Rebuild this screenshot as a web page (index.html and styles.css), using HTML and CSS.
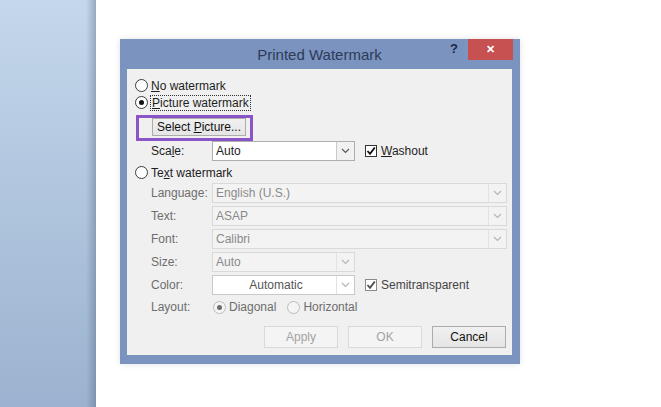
FILE: index.html
```html
<!DOCTYPE html>
<html>
<head>
    <meta charset="UTF-8">
    <title>Printed Watermark</title>
    <link rel="stylesheet" href="styles.css">
</head>
<body>
<div class="page">
    <div class="sidebar"></div>
    <div class="stage">
        <div class="dialog">
            <div class="titlebar">
                <span></span>
                <span class="title">Printed Watermark</span>
                <div class="controls">
                    <span class="help">?</span>
                    <span class="close">&#x2715;</span>
                </div>
            </div>

            <div class="content">
                <div class="row radioRow">
                    <i class="radio"></i>
                    <span><u>N</u>o watermark</span>
                </div>
                <div class="row radioRow">
                    <i class="radio on"></i>
                    <span class="focus"><u>P</u>icture watermark</span>
                </div>

                <div class="highlight">
                    <div class="btn pick">Select <u>P</u>icture...</div>
                </div>

                <div class="row field">
                    <span class="label">Sca<u>l</u>e:</span>
                    <div class="combo short">
                        <span class="val">Auto</span>
                        <span class="arr"><svg width="9" height="6" viewBox="0 0 9 6"><polyline points="1,1 4.5,4.5 8,1"/></svg></span>
                    </div>
                    <i class="check"><svg width="10" height="10" viewBox="0 0 10 10"><polyline points="1.5,5 4,7.8 8.8,1.5"/></svg></i>
                    <span><u>W</u>ashout</span>
                </div>

                <div class="row radioRow textMark">
                    <i class="radio"></i>
                    <span>Te<u>x</u>t watermark</span>
                </div>

                <div class="row field off">
                    <span class="label">Language:</span>
                    <div class="combo wide">
                        <span class="val">English (U.S.)</span>
                        <span class="arr"><svg width="9" height="6" viewBox="0 0 9 6"><polyline points="1,1 4.5,4.5 8,1"/></svg></span>
                    </div>
                </div>
                <div class="row field off">
                    <span class="label">Text:</span>
                    <div class="combo wide">
                        <span class="val">ASAP</span>
                        <span class="arr"><svg width="9" height="6" viewBox="0 0 9 6"><polyline points="1,1 4.5,4.5 8,1"/></svg></span>
                    </div>
                </div>
                <div class="row field off">
                    <span class="label">Font:</span>
                    <div class="combo wide">
                        <span class="val">Calibri</span>
                        <span class="arr"><svg width="9" height="6" viewBox="0 0 9 6"><polyline points="1,1 4.5,4.5 8,1"/></svg></span>
                    </div>
                </div>
                <div class="row field off">
                    <span class="label">Size:</span>
                    <div class="combo short">
                        <span class="val">Auto</span>
                        <span class="arr"><svg width="9" height="6" viewBox="0 0 9 6"><polyline points="1,1 4.5,4.5 8,1"/></svg></span>
                    </div>
                </div>
                <div class="row field off">
                    <span class="label">Color:</span>
                    <div class="combo short white">
                        <span class="val center">Automatic</span>
                        <span class="arr"><svg width="9" height="6" viewBox="0 0 9 6"><polyline points="1,1 4.5,4.5 8,1"/></svg></span>
                    </div>
                    <i class="check grey"><svg width="10" height="10" viewBox="0 0 10 10"><polyline points="1.5,5 4,7.8 8.8,1.5"/></svg></i>
                    <span class="semi">Semitransparent</span>
                </div>
                <div class="row field off layout">
                    <span class="label">Layout:</span>
                    <i class="radio dim on"></i>
                    <span class="opt first">Diagonal</span>
                    <i class="radio dim"></i>
                    <span class="opt">Horizontal</span>
                </div>

                <div class="buttons">
                    <div class="btn disabled">Apply</div>
                    <div class="btn disabled">OK</div>
                    <div class="btn">Cancel</div>
                </div>
            </div>
        </div>
    </div>
</div>
</body>
</html>
```

FILE: styles.css
```css
* {
    margin: 0;
    padding: 0;
    box-sizing: border-box;
}

html, body {
    width: 661px;
    height: 407px;
    overflow: hidden;
    background: #fff;
    font-family: "Liberation Sans", Arial, sans-serif;
    font-size: 12px;
    color: #1e1e1e;
}

.page {
    display: flex;
    height: 407px;
}

/*左侧Word背景*/
.sidebar {
    width: 96px;
    flex: none;
    background: linear-gradient(to right, rgba(0, 0, 0, 0) 86px, rgba(70, 85, 110, .35) 96px),
                linear-gradient(to bottom, #c4d7eb, #9bb3d0);
}

.stage {
    flex: 1;
    padding: 39px 0 0 24px;
}

.dialog {
    width: 400px;
    padding: 0 8px 9px 7px;
    background: #7b93bf;
    box-shadow: 0 0 6px rgba(0, 0, 0, .12);
}

.titlebar {
    display: grid;
    grid-template-columns: 1fr auto 1fr;
    align-items: center;
    height: 30px;
}

.title {
    font-size: 15px;
    color: #2d3b58;
}

.controls {
    justify-self: end;
    align-self: start;
    display: flex;
    margin-right: -1px;
}

.help {
    margin: 2px 10px 0 0;
    font-weight: bold;
    font-size: 13px;
    color: #1c2946;
}

.close {
    width: 45px;
    height: 21px;
    line-height: 21px;
    text-align: center;
    background: #c75050;
    color: #fff;
    font-size: 11px;
    font-weight: bold;
}

.content {
    display: flex;
    flex-direction: column;
    background: #f0f0f0;
    padding: 8px 5px 7px 8px;
}

.row {
    display: flex;
    align-items: center;
}

.radioRow {
    height: 17px;
}

.radioRow span {
    margin-left: 3px;
}

.radio {
    display: block;
    position: relative;
    width: 13px;
    height: 13px;
    flex: none;
    border: 1px solid #3c3c3c;
    border-radius: 50%;
    background: #fff;
}

.radio.on::after {
    content: "";
    position: absolute;
    top: 3px;
    left: 3px;
    width: 5px;
    height: 5px;
    border-radius: 50%;
    background: #111;
}

.radio.dim {
    border-color: #bcbcbc;
    background: #f4f4f4;
}

.radio.dim.on::after {
    background: #6d6d6d;
}

.focus {
    outline: 1px dotted #333;
    padding: 0 1px;
}

/*紫色标记框*/
.highlight {
    align-self: flex-start;
    margin: 4px 0 0 1px;
    padding: 0 4px 2px 13px;
    width: 117px;
    border: 3px solid #8a55c6;
}

.btn {
    width: 74px;
    height: 22px;
    line-height: 20px;
    text-align: center;
    border: 1px solid #acacac;
    background: linear-gradient(to bottom, #f0f0f0, #e5e5e5);
    color: #111;
}

.btn.pick {
    width: 94px;
    height: 18px;
    line-height: 16px;
}

.btn.disabled {
    border-color: #d9d9d9;
    background: #f4f4f4;
    color: #a3a3a3;
}

.field {
    height: 20px;
    padding-left: 16px;
}

.field + .field {
    margin-top: 3px;
}

.label {
    width: 61px;
    flex: none;
}

.combo {
    display: flex;
    height: 20px;
    border: 1px solid #abadb3;
    background: #fff;
}

.combo.short {
    width: 143px;
}

.combo.wide {
    width: 295px;
}

.val {
    flex: 1;
    padding-left: 3px;
    line-height: 18px;
}

.val.center {
    text-align: center;
}

.arr {
    display: flex;
    align-items: center;
    justify-content: center;
    width: 18px;
    border-left: 1px solid #c9c9c9;
    background: #f1f1f1;
}

.arr svg polyline {
    fill: none;
    stroke: #5a5a5a;
    stroke-width: 1.2;
}

.check {
    display: flex;
    align-items: center;
    justify-content: center;
    width: 12px;
    height: 12px;
    margin: 0 4px 0 10px;
    border: 1px solid #333;
    background: #fff;
}

.check svg polyline {
    fill: none;
    stroke: #111;
    stroke-width: 1.8;
}

.check.grey {
    border-color: #8a8a8a;
}

.check.grey svg polyline {
    stroke: #4a4a4a;
}

.textMark {
    margin-top: 3px;
}

.textMark + .field {
    margin-top: 2px;
}

/*禁用状态*/
.off .label {
    color: #6d6d6d;
}

.off .combo {
    border-color: #d9d9d9;
    background: #f3f3f3;
}

.off .val {
    color: #8a8a8a;
}

.off .arr {
    border-left-color: #e2e2e2;
    background: transparent;
}

.off .arr svg polyline {
    stroke: #b5b5b5;
}

.off .combo.white {
    border-color: #c8c8c8;
    background: #fff;
}

.off .combo.white .val {
    color: #555;
}

.semi {
    color: #444;
}

.layout {
    height: 16px;
}

.field.layout {
    margin-top: 4px;
}

.layout .radio {
    margin-left: 1px;
}

.layout .opt {
    margin-left: 3px;
    color: #6d6d6d;
}

.layout .opt.first {
    margin-right: 10px;
}

.buttons {
    display: flex;
    justify-content: flex-end;
    gap: 10px;
    margin-top: 11px;
    padding-right: 1px;
}
```
